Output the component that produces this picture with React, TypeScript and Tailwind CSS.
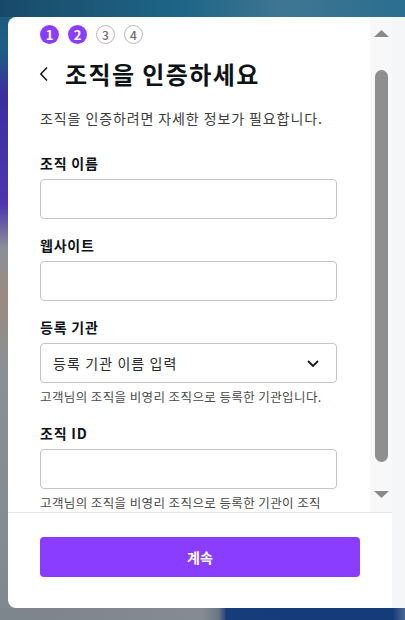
const font = { fontFamily: '"Noto Sans CJK KR", "Noto Sans", sans-serif' };

const Step = ({ n, active }: { n: number; active?: boolean }) =>
  active ? (
    <span className="flex w-[19px] h-[19px] items-center justify-center rounded-full bg-[#8b3dff] text-white text-[13px] font-bold leading-none">
      {n}
    </span>
  ) : (
    <span className="flex w-[19px] h-[19px] items-center justify-center rounded-full border border-[#b8b8b8] text-[#6b6b6b] text-[12px] font-medium leading-none">
      {n}
    </span>
  );

const Field = ({ label, className = "" }: { label: string; className?: string }) => (
  <div className={className}>
    <div className="text-[14px] font-bold leading-[20px] tracking-[0.8px] text-[#0e1318]">{label}</div>
    <div className="mt-[6px] h-[40px] w-[297px] rounded-[4px] border border-[#c4c4c4] bg-white" />
  </div>
);

const Scrollbar = () => (
  <div className="flex w-[22px] flex-col items-center bg-[#f8f8f8] pt-[13px]">
    <svg width="15" height="7" viewBox="0 0 15 7">
      <polygon points="7.5,0 15,7 0,7" fill="#8a8a8a" />
    </svg>
    <div className="mt-[33px] h-[392px] w-[13px] rounded-full bg-[#8f8f8f]" />
    <svg className="mt-[29px]" width="15" height="7" viewBox="0 0 15 7">
      <polygon points="0,0 15,0 7.5,7" fill="#8a8a8a" />
    </svg>
  </div>
);

export default function App() {
  return (
    <div
      style={font}
      className="flex h-[620px] w-[405px] flex-col overflow-hidden bg-[linear-gradient(180deg,#1b587a_0%,#1d5f84_8%,#3a2f9f_15%,#4d35b0_33%,#8b9097_40%,#9a8a80_48%,#8a9097_60%,#7f8890_100%)]"
    >
      <div className="h-[17px] bg-[linear-gradient(90deg,#194a6a_0%,#1e6587_45%,#3f7692_70%,#2a6e90_100%)]" />
      <div className="flex flex-1">
        <div className="w-[8px]" />
        <div className="flex w-[384px] flex-col rounded-l-[8px] bg-white">
          <div className="flex h-[495px] overflow-hidden">
            <div className="flex-1 pl-[32px] pt-[8px]">
              <div className="flex gap-[9px]">
                <Step n={1} active />
                <Step n={2} active />
                <Step n={3} />
                <Step n={4} />
              </div>
              <div className="mt-[14px] flex h-[32px] items-center">
                <svg className="ml-[-1px]" width="10" height="16" viewBox="0 0 10 16">
                  <path d="M8 1.5 L1.8 8 L8 14.5" fill="none" stroke="#0e1318" strokeWidth="1.5" />
                </svg>
                <h1 className="ml-[16px] text-[24px] font-bold leading-[32px] tracking-[1.4px] text-[#0e1318]">
                  조직을 인증하세요
                </h1>
              </div>
              <p className="mt-[18px] text-[14px] leading-[20px] tracking-[0.9px] text-[#3d3d3d]">
                조직을 인증하려면 자세한 정보가 필요합니다.
              </p>
              <Field label="조직 이름" className="mt-[25px]" />
              <Field label="웹사이트" className="mt-[16px]" />
              <div className="mt-[16px]">
                <div className="text-[14px] font-bold leading-[20px] tracking-[0.8px] text-[#0e1318]">등록 기관</div>
                <div className="mt-[6px] flex h-[40px] w-[297px] items-center justify-between rounded-[4px] border border-[#c4c4c4] bg-white pl-[12px] pr-[17px]">
                  <span className="text-[14px] tracking-[1.1px] text-[#2b2b2b]">등록 기관 이름 입력</span>
                  <svg width="12" height="7" viewBox="0 0 12 7">
                    <path d="M1 1 L6 6 L11 1" fill="none" stroke="#1a1a1a" strokeWidth="1.8" />
                  </svg>
                </div>
                <p className="mt-[6px] text-[12.5px] leading-[16px] tracking-[0.4px] text-[#4a4a4a]">
                  고객님의 조직을 비영리 조직으로 등록한 기관입니다.
                </p>
              </div>
              <Field label="조직 ID" className="mt-[18px]" />
              <p className="mt-[6px] text-[12.5px] leading-[16px] tracking-[0.4px] text-[#4a4a4a]">
                고객님의 조직을 비영리 조직으로 등록한 기관이 조직
              </p>
            </div>
            <Scrollbar />
          </div>
          <div className="flex-1 border-t border-[#e6e6e6] px-[32px] pt-[24px]">
            <button className="flex h-[40px] w-full items-center justify-center rounded-[4px] bg-[#8b3dff] text-[14px] font-bold text-white">
              계속
            </button>
          </div>
        </div>
        <div className="w-[13px] bg-[#f5f6f7]" />
      </div>
      <div className="h-[12px] bg-[linear-gradient(90deg,#7c848c_0%,#858b92_50%,#6a7686_54%,#173c7a_56%,#163b7b_97%,#4a6a90_100%)]" />
    </div>
  );
}
